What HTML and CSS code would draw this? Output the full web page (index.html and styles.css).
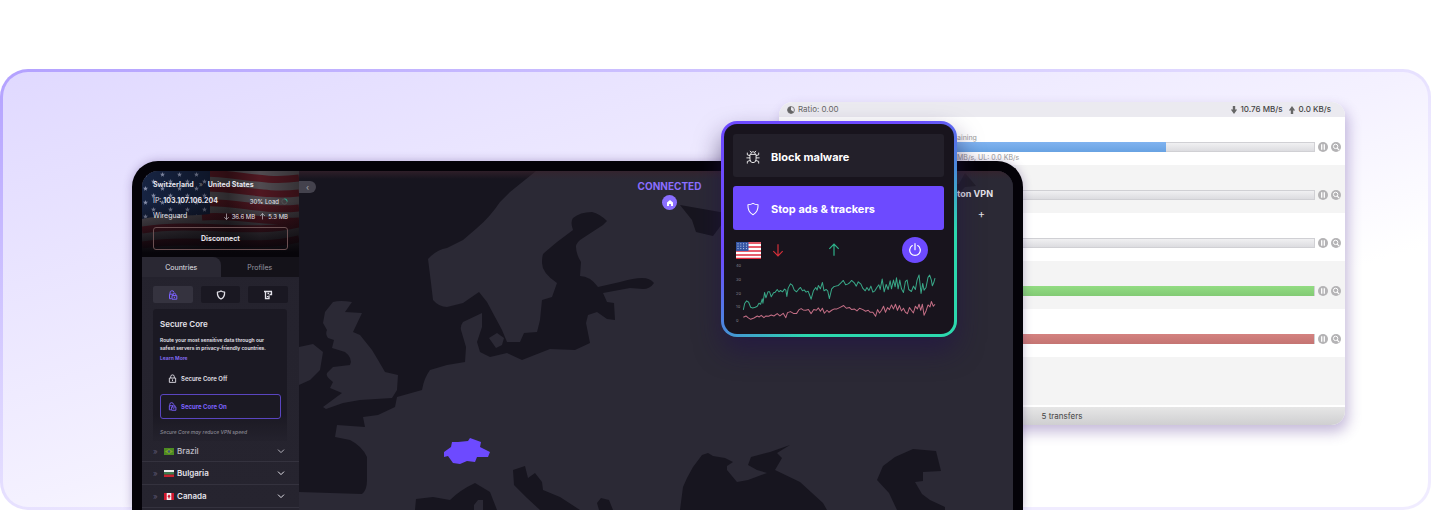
FILE: index.html
```html
<!DOCTYPE html>
<html lang="en">
<head>
<meta charset="utf-8">
<title>VPN features</title>
<link rel="stylesheet" href="styles.css">
</head>
<body>
<svg class="defs" aria-hidden="true">
  <symbol id="pause" viewBox="0 0 12 12"><circle cx="6" cy="6" r="5" fill="#b4b3b5"/><path d="M4.700 3.300v5.400M7.300 3.300v5.400" stroke="#fff" stroke-width="1.300"/></symbol>
  <symbol id="lens" viewBox="0 0 12 12"><circle cx="6" cy="6" r="5" fill="#b4b3b5"/><circle cx="5.600" cy="5.400" r="2.200" fill="none" stroke="#fff"/><path d="M7.200 7.100l2 2" stroke="#fff" stroke-width="1.200"/></symbol>
  <symbol id="shield" viewBox="0 0 16 16"><path d="M8 1.600C6.200 2.800 4.300 3.200 2.200 3.200c-.2 5 1.200 9 5.800 11.300 4.600-2.300 6-6.300 5.800-11.300C11.700 3.200 9.800 2.800 8 1.600z" fill="none" stroke="currentColor" stroke-width="1.200" stroke-linejoin="round"/></symbol>
  <symbol id="shield-bold" viewBox="0 0 16 16"><path d="M8 1.600C6.200 2.800 4.300 3.200 2.200 3.200c-.2 5 1.200 9 5.800 11.300 4.600-2.300 6-6.300 5.800-11.300C11.700 3.200 9.800 2.800 8 1.600z" fill="none" stroke="currentColor" stroke-width="2" stroke-linejoin="round"/></symbol>
  <symbol id="chev" viewBox="0 0 8 8"><path d="M1 2.600l3 3 3-3" fill="none" stroke="currentColor"/></symbol>
  <symbol id="core" viewBox="0 0 10 10"><path d="M2 4.200V3a2 2 0 0 1 4-.5M3.500 8.700H1.500V4.200h4M5 5.600V4.700a1.400 1.400 0 0 1 2.800 0v.9M4 5.600h4.800v3.600H4zM6.400 6.800v1.200" fill="none" stroke="currentColor"/></symbol>
  <symbol id="down" viewBox="0 0 12 12"><path d="M6 1v10M2 7l4 4 4-4" fill="none" stroke="currentColor"/></symbol>
  <symbol id="up" viewBox="0 0 12 12"><path d="M6 11V1M2 5l4-4 4 4" fill="none" stroke="currentColor"/></symbol>
  <symbol id="star" viewBox="0 0 10 10"><path d="M5 0l1.200 3.600H10L7 5.900 8.100 9.500 5 7.300 1.900 9.500 3 5.900 0 3.600h3.800z" fill="#8b93b0"/></symbol>
</svg>

<main class="hero">
  <section class="torrent">
    <header class="torrent-top">
      <span class="ratio"><svg class="i8" viewBox="0 0 10 10"><circle cx="5" cy="5" r="4.300" fill="none" stroke="#666" /><path d="M5 .7A4.300 4.300 0 1 0 8.500 7.600L5 5z" fill="#666"/></svg>Ratio: 0.00</span>
      <span class="rates">
        <svg class="i8" viewBox="0 0 8 8"><path d="M2.800 0h2.400v3.500h2L4 8 .8 3.500h2z" fill="#666"/></svg>10.76 MB/s
        <svg class="i8 gap" viewBox="0 0 8 8"><path d="M2.800 8h2.400V4.500h2L4 0 .8 4.500h2z" fill="#666"/></svg>0.0 KB/s
      </span>
    </header>
    <div class="transfer detailed">
      <p class="t-note">aining</p>
      <div class="t-line"><div class="bar"><div class="fill blue" style="width:72.300%"></div></div><svg class="i12"><use href="#pause"/></svg><svg class="i12"><use href="#lens"/></svg></div>
      <p class="t-note">MB/s, UL: 0.0 KB/s</p>
    </div>
    <div class="transfer alt"><div class="t-line"><div class="bar"></div><svg class="i12"><use href="#pause"/></svg><svg class="i12"><use href="#lens"/></svg></div></div>
    <div class="transfer"><div class="t-line"><div class="bar"></div><svg class="i12"><use href="#pause"/></svg><svg class="i12"><use href="#lens"/></svg></div></div>
    <div class="transfer alt"><div class="t-line"><div class="bar"><div class="fill green" style="width:100%"></div></div><svg class="i12"><use href="#pause"/></svg><svg class="i12"><use href="#lens"/></svg></div></div>
    <div class="transfer"><div class="t-line"><div class="bar"><div class="fill red" style="width:100%"></div></div><svg class="i12"><use href="#pause"/></svg><svg class="i12"><use href="#lens"/></svg></div></div>
    <div class="transfer alt"></div>
    <footer class="torrent-foot">5 transfers</footer>
  </section>

  <section class="laptop">
    <aside class="side">
      <div class="status">
        <svg class="usflag" viewBox="0 0 157 86" preserveAspectRatio="none" aria-hidden="true">
          <defs>
            <linearGradient id="fade" x1="0" y1="0" x2="0" y2="1"><stop offset=".35" stop-color="#07050a" stop-opacity="0"/><stop offset=".95" stop-color="#07050a"/></linearGradient>
            <linearGradient id="wave" x1="0" x2="1"><stop offset="0" stop-color="#000" stop-opacity="0"/><stop offset=".55" stop-color="#000" stop-opacity=".5"/><stop offset=".75" stop-color="#000" stop-opacity=".1"/><stop offset="1" stop-color="#000" stop-opacity=".4"/></linearGradient>
            <pattern id="stars" width="17" height="14" patternUnits="userSpaceOnUse"><use href="#star" x="1" y="1" width="5" height="5"/><use href="#star" x="9" y="8" width="5" height="5"/></pattern>
          </defs>
          <rect width="157" height="86" fill="#5a545a"/>
          <g fill="none" stroke="#591a25" stroke-width="7"><path d="M60 2c35 0 60 10 97 5"/><path d="M60 17c35 -1 60 9 97 5"/><path d="M60 32c35 -2 60 9 97 5"/><path d="M0 59c60 -9 110 6 157-6"/><path d="M0 74c60 -9 110 6 157-6"/><path d="M60 46c35 -3 60 6 97 4"/></g>
          <path d="M0 0h68v43c-20 3-48 0-68 5z" fill="#172443"/>
          <path d="M0 0h68v43c-20 3-48 0-68 5z" fill="url(#stars)"/>
          <rect width="157" height="86" fill="url(#wave)"/><rect width="157" height="86" fill="url(#fade)"/>
        </svg>
        <div class="line names"><b>Switzerland</b><span class="sep">»</span><b>United States</b></div>
        <div class="line ip"><span>IP: <b>103.107.106.204</b></span><span class="tiny">30% Load <svg class="i7" viewBox="0 0 8 8"><circle cx="4" cy="4" r="3" fill="none" stroke="#555"/><path d="M4 1a3 3 0 0 1 3 3" fill="none" stroke="#1fb894"/></svg></span></div>
        <div class="line proto"><span>Wireguard</span><span class="tiny"><svg class="i7"><use href="#down"/></svg> 36.6 MB <svg class="i7 gap2"><use href="#up"/></svg> 5.3 MB</span></div>
        <button class="disconnect">Disconnect</button>
      </div>
      <nav class="tabs"><button class="tab on">Countries</button><button class="tab">Profiles</button></nav>
      <div class="modes">
        <button class="mode on" aria-label="Secure Core"><svg class="i10"><use href="#core"/></svg></button>
        <button class="mode" aria-label="NetShield"><svg class="i10"><use href="#shield-bold"/></svg></button>
        <button class="mode" aria-label="Kill switch"><svg class="i10" viewBox="0 0 10 10"><path d="M1 1.500h8M2.500 1.500v7h3.500v-3M8.500 1.500v3h-2M4.500 3.500h1.500M4.500 6v1" fill="none" stroke="currentColor" stroke-width="1.300"/></svg></button>
      </div>
      <section class="card">
        <h2>Secure Core</h2>
        <p>Route your most sensitive data through our<br>safest servers in privacy-friendly countries.</p>
        <a href="#">Learn More</a>
        <button class="opt"><svg class="i9" viewBox="0 0 10 10"><path d="M3 4.500V3a2 2 0 0 1 4 0v1.500M1.500 4.500h7v4.800h-7zM5 6v2" fill="none" stroke="currentColor"/></svg>Secure Core Off</button>
        <button class="opt sel"><svg class="i9"><use href="#core"/></svg>Secure Core On</button>
        <em>Secure Core may reduce VPN speed</em>
      </section>
      <ul class="countries">
        <li class="dim"><span class="arr">»</span><svg class="fl" viewBox="0 0 10 7"><path d="M0 0h10v7H0z" fill="#4c8a22"/><path d="M5 1l4 2.500L5 6 1 3.500z" fill="#7fa52a"/><circle cx="5" cy="3.500" r="1.300" fill="#3a5a78"/></svg>Brazil<svg class="i8 end"><use href="#chev"/></svg></li>
        <li><span class="arr">»</span><svg class="fl" viewBox="0 0 10 7"><path d="M0 0h10v2.300H0z" fill="#eee"/><path d="M0 2.300h10v2.300H0z" fill="#38804a"/><path d="M0 4.600h10V7H0z" fill="#c8202f"/></svg>Bulgaria<svg class="i8 end"><use href="#chev"/></svg></li>
        <li><span class="arr">»</span><svg class="fl" viewBox="0 0 10 7"><path d="M0 0h10v7H0z" fill="#d0162d"/><path d="M2.700 0h4.600v7H2.700z" fill="#f2eef2"/><path d="M5 1.200l1.500 2L5.300 5v1h-.6V5L3.500 3.200z" fill="#d0162d"/></svg>Canada<svg class="i8 end"><use href="#chev"/></svg></li>
      </ul>
    </aside>
    <div class="map">
      <svg class="land" viewBox="299 171 714 339" preserveAspectRatio="xMinYMin slice" aria-hidden="true">
        <defs><linearGradient id="rim" x1="0" y1="0" x2="0" y2="1"><stop offset="0" stop-color="#38222c" stop-opacity=".7"/><stop offset="1" stop-color="#38222c" stop-opacity="0"/></linearGradient></defs>
        <path d="M299 171h714v339H299z" fill="#2b2935"/>
        <g fill="#17151f">
          <path d="M536 171L510 192 500 202Q490 217 477 228L463 240 447 248Q436 250 428 259L431 283 433 300Q439 307 447 307L463 303 479 292 487 302 502 330 507 342H520L524 333 537 332 540 320 542 300 552 297 557 283Q542 273 542 263 542 254 544 253L557 242 573 230Q570 222 573 218 580 212 592 212 600 214 607 221L603 225 583 238Q576 242 576 247 576 254 581 262L580 276Q590 276 598 287L620 282Q634 278 642 278 650 278 654 283 650 289 643 289L630 288 603 293 607 302 614 303 615 320 607 319 597 312 588 315 586 323 590 343 575 350 550 349 522 360 507 353 490 357 480 352 477 342 482 327V313L463 322Q460 326 461 330L466 347 465 362 447 365 430 370Q424 378 422 390L397 397 395 407 378 415 363 417 365 427 337 425 335 437 350 440Q362 446 367 457V480Q367 490 362 494L299 492V171z"/>
          <path d="M415 510L416 499 433 497 450 500Q460 490 475 483L490 492 497 510zM513 470L525 466 528 478 535 473 542 482 543 490 560 497 580 510H540L527 498 514 485zM597 503l4-5 8 2 4 10h-14z"/>
          <path d="M680 510L683 487 687 478 693 467 702 455 708 453 713 456 725 458 733 462 727 466 727 470 737 482 748 480 767 473 757 470 748 465 751 457 770 452 790 445 777 453 782 458 775 470 800 482 823 503 827 510z"/>
          <path d="M877 480L883 466 895 457 913 449 936 451 941 471 923 472V481L915 482 922 494 930 500 945 507V510H897L889 493zM680 205L720 212H722V224L713 236 696 232 692 220z"/>
          <path d="M956 184h3l6-11 11 13-11 1-9 9z" fill="#211e29"/>
        </g>
        <g fill="#2b2935">
          <path d="M333 302Q340 300 352 302L345 312 362 313 353 332 360 335 372 350 378 360 385 372 398 375 397 390 392 398 360 400 343 403 326 409 323 407 342 393 330 388 333 382Q325 376 327 373L333 367 350 365Q353 358 345 352L332 348 334 340 328 338Q325 334 327 330L323 323 325 312z"/>
          <path d="M299 347L313 344 323 352 320 370 310 380 299 385zM489 338L497 333 504 338 502 345 496 348zM474 505l4-5h5v10h-9z"/>
        </g>
        <path d="M452 442L458 442 468 441 470 438 481 442 480 447 490 452 488 457 477 457 475 462 467 461 460 464 453 463 448 456 444 457V452L451 447z" fill="#6d4aff"/>
        <path d="M299 171h714v8H299z" fill="url(#rim)"/>
      </svg>
      <button class="collapse" aria-label="Collapse">‹</button>
      <div class="connected"><b>CONNECTED</b><span class="home"><svg class="i8" viewBox="0 0 8 8"><path d="M4 1L1 3.500V7h2V5h2v2h2V3.500z" fill="#fff"/></svg></span></div>
      <div class="brand"><b>oton VPN</b><button class="plus" aria-label="Zoom in">+</button></div>
    </div>
  </section>

  <section class="popup">
    <button class="feature"><svg class="i14" viewBox="0 0 16 16"><path d="M5.500 4.500a2.500 2.500 0 0 1 5 0M4.500 5h7v5.500a3.500 4 0 0 1-7 0zM4.500 9H.5M11.500 9h4M4.500 6.500L1.500 5.500V3M11.500 6.500l3-1V3M4.800 12l-3.300 1v2.500M11.200 12l3.300 1v2.500M6 2.500L4.500 1M10 2.500L11.500 1" fill="none" stroke="currentColor"/></svg>Block malware</button>
    <button class="feature active"><svg class="i14"><use href="#shield"/></svg>Stop ads &amp; trackers</button>
    <div class="stats">
      <svg class="us" viewBox="0 0 25 17"><path d="M0 0h25v17H0z" fill="#fff"/><path d="M0 1h25M0 5h25M0 9h25M0 13h25M0 16.500h25" stroke="#e02a3c" stroke-width="1.500"/><path d="M0 0h12.500v9H0z" fill="#3455a4"/><path d="M1.500 1.800h10M1.500 4.200h10M1.500 6.600h10" stroke="#c7d2ee" stroke-dasharray="1 1.800"/></svg>
      <svg class="i14 dn"><use href="#down"/></svg>
      <svg class="i14 upw"><use href="#up"/></svg>
      <button class="power" aria-label="Power"><svg class="i14" viewBox="0 0 14 14"><path d="M4.300 2.600a5.300 5.300 0 1 0 5.400 0M7 .7v6" fill="none" stroke="currentColor" stroke-width="1.200" stroke-linecap="round"/></svg></button>
    </div>
    <div class="chart">
      <div class="axis"><span>40</span><span>30</span><span>20</span><span>10</span><span>0</span></div>
      <svg class="plot" viewBox="80 105 584 170" preserveAspectRatio="none" fill="none" stroke-width="3" stroke-linejoin="round">
        <polyline stroke="#39a888" points="84,239 88,220 94,212 100,216 106,231 112,233 120,231 126,228 131,219 136,222 141,206 143,219 148,187 152,203 158,185 163,185 168,200 175,188 180,186 186,178 191,185 196,181 202,185 208,177 212,180 215,199 219,174 226,161 232,166 237,179 244,185 250,178 256,172 262,182 267,179 273,186 279,183 284,196 288,207 295,182 302,172 306,180 310,166 316,176 322,157 327,182 333,178 338,182 343,205 350,176 356,170 362,168 370,166 377,159 385,151 392,164 398,162 404,158 410,151 418,158 424,168 430,155 438,162 444,175 451,182 456,172 462,181 468,168 474,186 480,182 486,172 492,164 496,178 502,147 508,185 514,163 520,178 526,152 530,176 536,150 541,170 545,143 550,176 555,150 560,176 566,187 572,154 577,150 582,178 590,184 596,168 602,178 607,150 613,135 619,190 624,160 628,180 634,172 640,142 645,135 650,150 653,167 657,158 661,144"/>
        <polyline stroke="#c56f86" points="84,261 92,257 98,262 106,267 116,263 126,257 132,260 138,255 146,262 152,257 160,258 168,254 176,257 186,250 194,257 204,249 212,262 217,247 226,244 236,250 244,250 252,238 258,235 264,239 272,240 280,238 288,250 296,238 304,240 310,233 316,243 322,234 328,249 336,240 342,246 350,240 358,236 366,236 374,232 386,226 394,234 404,232 410,238 418,236 426,242 434,234 444,238 452,243 460,240 466,246 474,246 482,258 488,238 494,248 500,240 506,228 512,246 518,232 524,238 530,224 536,236 542,222 548,240 554,226 560,242 566,234 572,246 578,250 584,232 590,240 596,248 602,228 608,236 613,222 618,240 623,222 628,255 634,242 640,224 646,230 650,214 656,228 661,222"/>
      </svg>
    </div>
  </section>
</main>
</body>
</html>
```

FILE: styles.css
```css
* { box-sizing: border-box; }
body { margin: 0; background: #fff; font-family: Inter, "Liberation Sans", sans-serif; overflow: hidden; }
h2, p, ul { margin: 0; padding: 0; list-style: none; }
button { font: inherit; color: inherit; border: 0; padding: 0; background: none; }
svg { flex: none; display: block; }
.defs { position: absolute; width: 0; height: 0; }
.i7 { width: 7px; height: 7px; }
.i8 { width: 8px; height: 8px; }
.i9 { width: 9px; height: 9px; }
.i10 { width: 10px; height: 10px; }
.i12 { width: 12px; height: 12px; }
.i14 { width: 14px; height: 14px; }

.hero {
  position: relative;
  min-height: 441px;
  margin-top: 69px;
  border: 3px solid transparent;
  border-radius: 28px;
  background:
    linear-gradient(to bottom right, #e0d9ff, #f4f1ff 50%, #fff 70%) padding-box,
    linear-gradient(to bottom right, #b3a1ff, #d9d0ff 35%, #f0ecff 60%) border-box;
}

/* Transfer window */
.torrent {
  position: absolute;
  top: 30px;
  left: 776px;
  width: 566px;
  border-radius: 14px;
  overflow: hidden;
  background: #fff;
  color: #666;
  box-shadow: 3px 7px 14px rgba(75, 40, 140, .32);
}
.torrent-top {
  display: flex;
  justify-content: space-between;
  height: 15px;
  padding: 0 14px 0 8px;
  background: #ebeaf0;
  font-size: 8px;
  line-height: 15px;
}
.ratio, .rates { display: flex; align-items: center; gap: 3px; }
.rates { color: #444; font-weight: 500; }
.gap { margin-left: 2px; }
.transfer { height: 48px; padding: 24px 3px 0 0; background: #fff; }
.transfer.alt { background: #f4f4f4; }
.transfer.detailed { padding-top: 16px; }
.t-note { height: 8px; padding-left: 178px; font-size: 7px; line-height: 10px; color: #999; }
.t-line { display: flex; align-items: center; gap: 1px; }
.bar { flex: 1; height: 10px; margin-right: 1px; border: 1px solid #d0d0d4; background: linear-gradient(#f0f0f2, #dcdce0); }
.fill { height: 10px; margin: -1px 0; }
.blue { background: linear-gradient(#80b3f0, #68a2e2); }
.green { background: linear-gradient(#92dc82, #82ca74); }
.red { background: linear-gradient(#d48280, #c47472); }
.torrent-foot {
  height: 20px;
  border-top: 2px solid #fff;
  background: linear-gradient(#e6e6e6, #cfcfd1);
  font-size: 8px;
  line-height: 18px;
  text-align: center;
  color: #444;
}

/* Desktop app */
.laptop {
  position: absolute;
  top: 89px;
  bottom: -3px;
  left: 129px;
  display: flex;
  width: 891px;
  border: 10px solid #040208;
  border-bottom: 0;
  border-radius: 26px 26px 0 0;
  overflow: hidden;
  background: #24222d;
  color: #e4e2ea;
  box-shadow: 0 0 10px rgba(60, 30, 110, .3);
}
.side { flex: none; width: 157px; overflow: hidden; background: linear-gradient(#24222d, #26242f); font-size: 7px; }
.status { position: relative; height: 86px; padding: 6px 11px 0; background: #0a0810; }
.usflag { position: absolute; inset: 0; width: 100%; height: 100%; }
.line { position: relative; display: flex; align-items: center; justify-content: space-between; height: 14px; }
.names { justify-content: flex-start; height: 15px; }
.sep { width: 14px; text-align: center; color: #777; }
.ip { height: 17px; }
.proto { height: 12px; }
.tiny { display: flex; align-items: center; gap: 2px; font-size: 6px; padding-top: 2px; }
.gap2 { margin-left: 2px; }
.disconnect {
  position: relative;
  display: block;
  width: 100%;
  height: 23px;
  margin-top: 6px;
  border: 1px solid #6b5052;
  border-radius: 3px;
  font-size: 7px;
  font-weight: 700;
}
.tabs { display: flex; height: 22px; padding-bottom: 2px; background: linear-gradient(#141219 20px, #24222d 20px); }
.tab { flex: 1; font-size: 7px; color: #9a98a2; }
.tab.on { border-radius: 0 8px 0 0; background: #2a2833; color: #e4e2ea; }
.modes { display: flex; gap: 8px; padding: 7px 11px 6px; }
.mode { flex: 1; display: flex; align-items: center; justify-content: center; height: 17px; border-radius: 2px; background: #1a1822; }
.mode.on { background: #35333f; color: #7c62ff; }
.card {
  height: 132px;
  margin: 0 12px 0 11px;
  padding: 9px 6px 0 7px;
  border-radius: 3px 3px 0 0;
  background: linear-gradient(#1b1923 80%, #24222d);
}
.card h2 { font-size: 8px; line-height: 12px; font-weight: 600; }
.card p { margin-top: 6px; font-size: 5px; line-height: 8px; font-weight: 600; white-space: nowrap; }
.card a { display: block; margin-top: 1px; font-size: 5px; line-height: 10px; font-weight: 600; color: #8a70ff; text-decoration: none; }
.opt { display: flex; align-items: center; gap: 4px; width: 100%; height: 25px; padding-left: 7px; margin-top: 3px; border: 1px solid transparent; border-radius: 3px; font-size: 6px; font-weight: 600; }
.opt.sel { border-color: #5a45c0; color: #7c62ff; font-weight: 700; }
.card em { display: block; margin-top: 9px; font-size: 5px; line-height: 8px; font-weight: 500; color: #8c8a95; white-space: nowrap; }
.countries { font-size: 8px; font-weight: 600; }
.countries li { display: flex; align-items: center; height: 23px; padding: 0 14px 0 11px; border-bottom: 1px solid #34323e; }
.countries .dim { height: 21px; color: #b5b3bd; }
.arr { width: 11px; color: #5a5570; font-weight: 400; }
.fl { width: 10px; height: 7px; margin-right: 3px; }
.end { margin-left: auto; }

.map { position: relative; flex: 1; display: flex; justify-content: space-between; background: #17151f; }
.land { position: absolute; inset: 0; width: 100%; height: 100%; }
.collapse { position: relative; width: 17px; height: 12px; margin-top: 10px; border-radius: 0 6px 6px 0; background: #44424d; color: #aaa; font-size: 8px; line-height: 10px; }
.connected { position: absolute; top: 8px; left: 0; width: 741px; display: flex; flex-direction: column; align-items: center; gap: 2px; font-size: 10px; line-height: 14px; color: #8a6eff; }
.home { display: flex; align-items: center; justify-content: center; width: 15px; height: 15px; border-radius: 50%; background: #8a6eff; }
.brand { position: relative; display: flex; flex-direction: column; align-items: flex-end; padding: 16px 20px 0 0; font-size: 9px; line-height: 13px; }
.plus { margin: 6px 8px 0 0; font-size: 11px; line-height: 16px; }

/* Protection panel */
.popup {
  position: absolute;
  top: 49px;
  left: 718px;
  width: 236px;
  height: 216px;
  padding: 10px 9px 0;
  border: 3px solid transparent;
  border-radius: 16px;
  background:
    linear-gradient(#18141d, #18141d) padding-box,
    linear-gradient(145deg, #6d4aff 35%, #4a88dc 55%, #2cd8ae 72%) border-box;
  color: #fff;
  box-shadow: 0 14px 26px rgba(34, 18, 72, .6);
}
.feature { display: flex; align-items: center; gap: 11px; width: 211px; height: 43px; margin-bottom: 9px; padding: 2px 0 0 13px; border-radius: 3px; background: #23202a; font-size: 11px; font-weight: 700; }
.feature.active { background: #6d4aff; height: 44px; margin-bottom: 7px; }
.stats { display: flex; align-items: center; height: 26px; padding-left: 3px; }
.us { width: 25px; height: 17px; }
.dn { margin-left: 10px; color: #d8303a; }
.upw { margin-left: 42px; color: #2fb58c; }
.power { display: flex; align-items: center; justify-content: center; width: 26px; height: 26px; margin: 0 17px 0 auto; border-radius: 50%; background: #6d4aff; }
.chart { display: flex; height: 60px; padding-left: 3px; }
.axis { display: flex; flex-direction: column; justify-content: space-between; width: 6px; font-size: 4px; line-height: 5px; color: #85838c; }
.plot { width: 194px; height: 57px; margin-top: 2px; }
```
